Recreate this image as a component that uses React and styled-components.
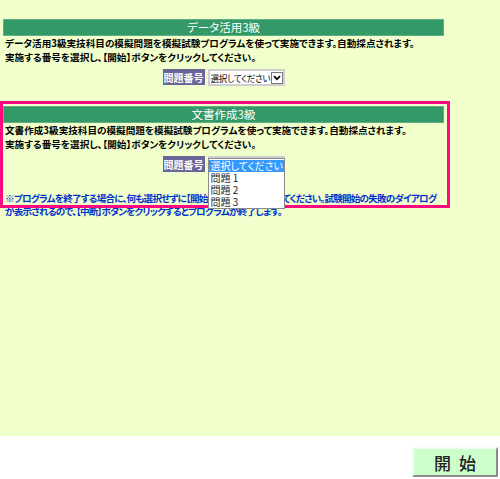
import React from "react";
import styled, { createGlobalStyle } from "styled-components";

const Global = createGlobalStyle`
  html, body { margin: 0; padding: 0; }
  body {
    font-family: "Noto Sans CJK JP", "Noto Sans", sans-serif;
    font-feature-settings: "palt";
  }
`;

const Page = styled.div`
  display: flex;
  flex-direction: column;
  width: 500px;
  height: 479px;
`;

const Main = styled.main`
  position: relative;
  height: 436px;
  box-sizing: border-box;
  padding-top: 19px;
  background: #f0ffcc;
`;

const Content = styled.div`
  width: 441px;
  margin-left: 3px;
`;

const Section = styled.section`
  margin-bottom: 21px;
`;

const Bar = styled.h2`
  margin: 0;
  height: 17px;
  line-height: 17px;
  background: #339966;
  box-shadow: inset 0 0 0 1px rgba(255, 255, 255, 0.22);
  color: #fff;
  font-size: 11.5px;
  font-weight: normal;
  text-align: center;
`;

const Para = styled.p`
  margin: 0;
  padding-left: 2px;
  font-size: 9.6px;
  font-weight: bold;
  line-height: 14px;
  letter-spacing: ${(p) => (p.$tight ? "-0.8px" : "0")};
  color: ${(p) => p.$color || "#000"};
`;

const Row = styled.div`
  display: flex;
  justify-content: center;
  gap: 3px;
  margin-top: 5px;
  height: 16px;
`;

const Label = styled.span`
  display: flex;
  align-items: center;
  justify-content: center;
  width: 42px;
  height: 16px;
  background: #666699;
  color: #fff;
  font-size: 10px;
  font-weight: bold;
`;

const SelectBox = styled.div`
  position: relative;
  display: flex;
  align-items: center;
  width: 77px;
  height: 17px;
  box-sizing: border-box;
  border: 2px solid #cfcfcf;
  background: #fff;
  font-size: 8.6px;
  color: #000;
`;

const SelectText = styled.span`
  flex: 1;
  padding-left: 1px;
  white-space: nowrap;
  overflow: hidden;
  letter-spacing: -0.3px;
`;

const Arrow = styled.span`
  display: flex;
  align-items: center;
  justify-content: center;
  flex: none;
  width: 12px;
  height: 12px;
  box-sizing: border-box;
  border: 1px solid #7a7a7a;
  background: #fff;
`;

const ListBox = styled.ul`
  position: absolute;
  top: 0px;
  left: -2px;
  z-index: 2;
  width: 77px;
  margin: 0;
  padding: 1px 0 0;
  box-sizing: border-box;
  list-style: none;
  background: #fff;
  border: 1px solid #8a8a8a;
`;

const Option = styled.li`
  height: 12px;
  line-height: 12px;
  padding-left: 2px;
  font-size: 10px;
  white-space: nowrap;
  background: ${(p) => (p.$active ? "#3399ff" : "transparent")};
  color: ${(p) => (p.$active ? "#fff" : "#222")};
`;

const Frame = styled.div`
  position: absolute;
  left: 0;
  top: 101px;
  width: 450px;
  height: 107px;
  box-sizing: border-box;
  border: 3px solid #ff0a7e;
  pointer-events: none;
  z-index: 1;
`;

const Note = styled.div`
  margin-top: -1px;
  & > p { line-height: 13px; }
`;

const Footer = styled.footer`
  display: flex;
  justify-content: flex-end;
  align-items: flex-start;
  height: 43px;
  box-sizing: border-box;
  padding: 11px 2px 0 0;
  background: #fff;
`;

const StartButton = styled.button`
  width: 86px;
  height: 30px;
  padding: 0;
  background: #ccffcc;
  border: 2px solid;
  border-color: #f0fff0 #8c8c8c #8c8c8c #f0fff0;
  font-family: "Noto Sans CJK JP", sans-serif;
  font-size: 17px;
  font-weight: 500;
  color: #222;
  letter-spacing: 8px;
  text-indent: 8px;
`;

const Chevron = () => (
  <svg width="8" height="6" viewBox="0 0 8 6">
    <path d="M1 1.2 L4 4.2 L7 1.2" fill="none" stroke="#000" strokeWidth="1.8" />
  </svg>
);

const options = ["選択してください", "問題 1", "問題 2", "問題 3"];

const Picker = ({ open }) => (
  <Row>
    <Label>問題番号</Label>
    <SelectBox>
      <SelectText>選択してください</SelectText>
      <Arrow>
        <Chevron />
      </Arrow>
      {open && (
        <ListBox>
          {options.map((o, i) => (
            <Option key={o} $active={i === 0}>
              {o}
            </Option>
          ))}
        </ListBox>
      )}
    </SelectBox>
  </Row>
);

const Exam = ({ title, open }) => (
  <Section>
    <Bar>{title}</Bar>
    <Para>
      {title}実技科目の模擬問題を模擬試験プログラムを使って実施できます。自動採点されます。
    </Para>
    <Para>実施する番号を選択し、【開始】ボタンをクリックしてください。</Para>
    <Picker open={open} />
  </Section>
);

export default function App() {
  return (
    <>
      <Global />
      <Page>
        <Main>
          <Content>
            <Exam title="データ活用3級" />
            <Exam title="文書作成3級" open />
            <Note>
              <Para $color="#0033cc" $tight>
                ※プログラムを終了する場合に、何も選択せずに【開始】ボタンをクリックしてください。試験開始の失敗のダイアログが表示されるので、【中断】ボタンをクリックするとプログラムが終了します。
              </Para>
            </Note>
          </Content>
          <Frame />
        </Main>
        <Footer>
          <StartButton>開始</StartButton>
        </Footer>
      </Page>
    </>
  );
}
